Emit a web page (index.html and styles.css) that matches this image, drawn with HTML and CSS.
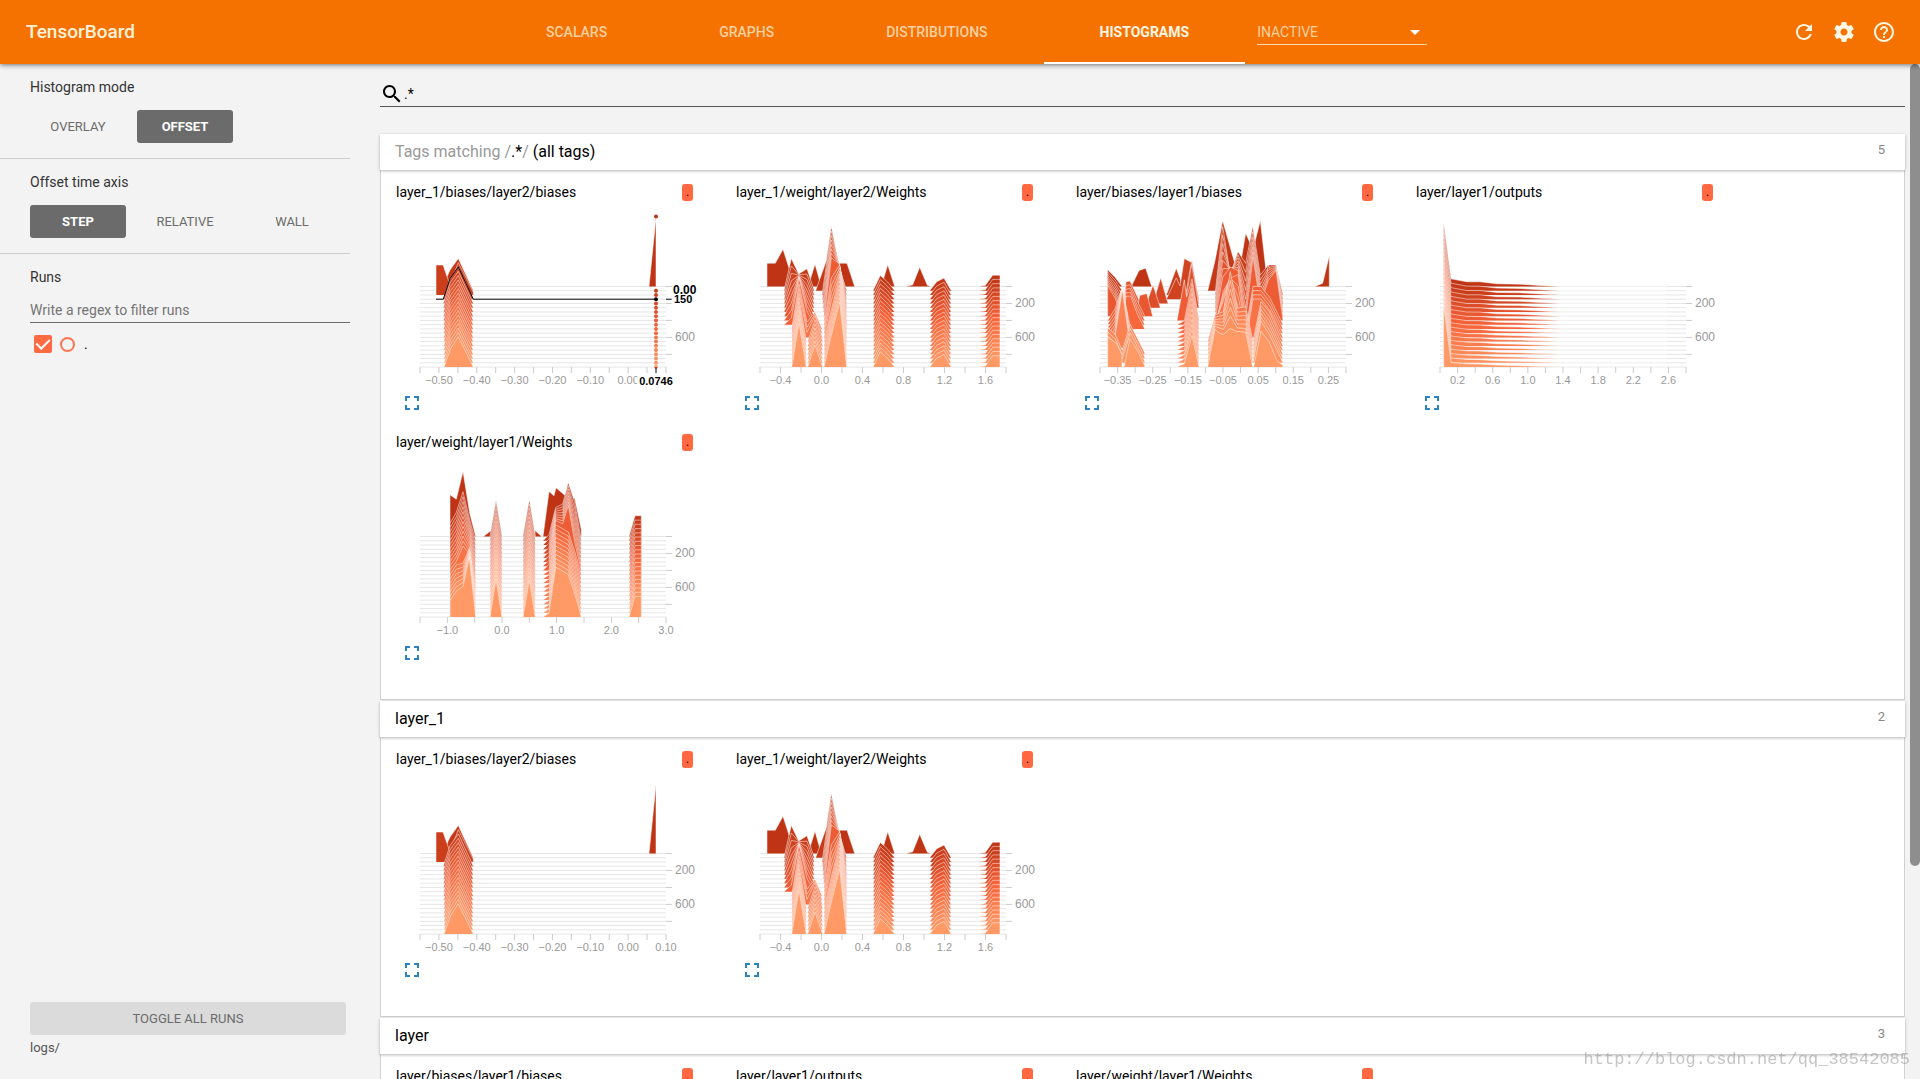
FILE: index.html
```
<!DOCTYPE html>
<html lang="en">
<head>
    <meta charset="UTF-8">
    <meta name="viewport" content="width=device-width, initial-scale=1">
    <title>TensorBoard</title>
    <link rel="stylesheet" href="styles.css">
</head>
<body>
    <header class="toolbar">
        <h1 class="brand">TensorBoard</h1>
        <nav class="tabs">
            <button class="tab">SCALARS</button>
            <button class="tab">GRAPHS</button>
            <button class="tab">DISTRIBUTIONS</button>
            <button class="tab selected">HISTOGRAMS</button>
            <div class="inactive">
                <select aria-label="Inactive dashboards">
                    <option>INACTIVE</option>
                </select>
            </div>
        </nav>
        <div class="actions">
            <button class="icon-button" aria-label="Reload">
                <svg viewBox="0 0 24 24"><path d="M17.65 6.35C16.2 4.9 14.21 4 12 4c-4.42 0-7.99 3.58-7.99 8s3.57 8 7.99 8c3.73 0 6.84-2.55 7.73-6h-2.08c-.82 2.33-3.04 4-5.65 4-3.31 0-6-2.69-6-6s2.69-6 6-6c1.66 0 3.14.69 4.22 1.78L13 11h7V4l-2.35 2.35z"/></svg>
            </button>
            <button class="icon-button" aria-label="Settings">
                <svg viewBox="0 0 24 24"><path d="M19.43 12.98c.04-.32.07-.64.07-.98s-.03-.66-.07-.98l2.11-1.65c.19-.15.24-.42.12-.64l-2-3.46c-.12-.22-.39-.3-.61-.22l-2.49 1c-.52-.4-1.08-.73-1.69-.98l-.38-2.65C14.46 2.18 14.25 2 14 2h-4c-.25 0-.46.18-.49.42l-.38 2.65c-.61.25-1.17.59-1.69.98l-2.49-1c-.23-.09-.49 0-.61.22l-2 3.46c-.13.22-.07.49.12.64l2.11 1.65c-.04.32-.07.65-.07.98s.03.66.07.98l-2.11 1.65c-.19.15-.24.42-.12.64l2 3.46c.12.22.39.3.61.22l2.49-1c.52.4 1.08.73 1.69.98l.38 2.65c.03.24.24.42.49.42h4c.25 0 .46-.18.49-.42l.38-2.65c.61-.25 1.17-.59 1.69-.98l2.49 1c.23.09.49 0 .61-.22l2-3.46c.12-.22.07-.49-.12-.64l-2.11-1.65zM12 15.5c-1.93 0-3.5-1.57-3.5-3.5s1.57-3.5 3.5-3.5 3.5 1.57 3.5 3.5-1.57 3.5-3.5 3.5z"/></svg>
            </button>
            <button class="icon-button" aria-label="Help">
                <svg viewBox="0 0 24 24"><path d="M11 18h2v-2h-2v2zm1-16C6.48 2 2 6.48 2 12s4.48 10 10 10 10-4.48 10-10S17.52 2 12 2zm0 18c-4.41 0-8-3.59-8-8s3.59-8 8-8 8 3.59 8 8-3.59 8-8 8zm0-14c-2.21 0-4 1.79-4 4h2c0-1.1.9-2 2-2s2 .9 2 2c0 2-3 1.75-3 5h2c0-2.25 3-2.5 3-5 0-2.21-1.79-4-4-4z"/></svg>
            </button>
        </div>
    </header>

    <div class="content">
        <aside class="sidebar">
            <section class="setting">
                <h2>Histogram mode</h2>
                <div class="options">
                    <button class="option">OVERLAY</button>
                    <button class="option selected">OFFSET</button>
                </div>
            </section>
            <section class="setting">
                <h2>Offset time axis</h2>
                <div class="options">
                    <button class="option selected">STEP</button>
                    <button class="option">RELATIVE</button>
                    <button class="option">WALL</button>
                </div>
            </section>
            <section class="runs">
                <h2>Runs</h2>
                <input class="regex" type="text" placeholder="Write a regex to filter runs" aria-label="Filter runs">
                <div class="run">
                    <input type="checkbox" id="run-0" checked>
                    <span class="isolate"></span>
                    <label for="run-0">.</label>
                </div>
            </section>
            <div class="sidebar-footer">
                <button class="toggle-all">TOGGLE ALL RUNS</button>
                <div class="logdir">logs/</div>
            </div>
        </aside>

        <main class="dashboard">
            <div class="search">
                <svg viewBox="0 0 24 24"><path d="M15.5 14h-.79l-.28-.27C15.41 12.59 16 11.11 16 9.5 16 5.91 13.09 3 9.5 3S3 5.91 3 9.5 5.91 16 9.5 16c1.61 0 3.09-.59 4.23-1.57l.27.28v.79l5 4.99L20.49 19l-4.99-5zm-6 0C7.01 14 5 11.99 5 9.5S7.01 5 9.5 5 14 7.01 14 9.5 11.99 14 9.5 14z"/></svg>
                <input type="text" value=".*" aria-label="Filter tags">
            </div>

            <section class="pane">
                <button class="pane-header">
                    <span><span class="muted">Tags matching /</span>.*<span class="muted">/</span> (all tags)</span>
                    <span class="count">5</span>
                </button>
                <div class="cards">
                    <div class="card" data-tag="layer_1/biases/layer2/biases" data-hover="3"></div>
                    <div class="card" data-tag="layer_1/weight/layer2/Weights"></div>
                    <div class="card" data-tag="layer/biases/layer1/biases"></div>
                    <div class="card" data-tag="layer/layer1/outputs"></div>
                    <div class="card" data-tag="layer/weight/layer1/Weights"></div>
                </div>
            </section>

            <section class="pane">
                <button class="pane-header"><span>layer_1</span><span class="count">2</span></button>
                <div class="cards">
                    <div class="card" data-tag="layer_1/biases/layer2/biases"></div>
                    <div class="card" data-tag="layer_1/weight/layer2/Weights"></div>
                </div>
            </section>

            <section class="pane">
                <button class="pane-header"><span>layer</span><span class="count">3</span></button>
                <div class="cards">
                    <div class="card" data-tag="layer/biases/layer1/biases"></div>
                    <div class="card" data-tag="layer/layer1/outputs"></div>
                    <div class="card" data-tag="layer/weight/layer1/Weights"></div>
                </div>
            </section>
        </main>
        <div class="scroll-thumb"></div>
    </div>
    <div class="watermark">http://blog.csdn.net/qq_38542085</div>
    <script src="script.js"></script>
</body>
</html>
```

FILE: styles.css
```
* {
    box-sizing: border-box;
}
body {
    margin: 0;
    height: 100vh;
    display: flex;
    flex-direction: column;
    overflow: hidden;
    background: #f3f3f3;
    font-family: Roboto, "Liberation Sans", sans-serif;
    font-size: 14px;
    color: #000;
}
button, input, select {
    font-family: inherit;
    border: none;
    background: none;
    padding: 0;
    outline: none;
}
button {
    cursor: pointer;
}
h1, h2 {
    margin: 0;
    font-weight: 400;
}

/* toolbar */
.toolbar {
    display: flex;
    flex: none;
    height: 64px;
    background: #f57200;
    color: #fff2dc;
    box-shadow: 0 1px 5px rgba(0, 0, 0, 0.55);
    z-index: 2;
}
.brand {
    width: 490px;
    padding-left: 26px;
    font-size: 19px;
    font-weight: 500;
    line-height: 64px;
}
.tabs {
    display: flex;
    flex: 1;
}
.tab {
    padding: 2px 56px 0;
    border-bottom: 2px solid transparent;
    font-size: 14px;
    font-weight: 500;
    color: #fcd0a0;
}
.tab.selected {
    border-bottom-color: #fff;
    font-weight: 700;
    color: #fff6e4;
}
.inactive {
    position: relative;
    width: 170px;
    height: 45px;
    margin-left: 12px;
    padding-top: 20px;
    border-bottom: 1px solid #fcd9a8;
}
.inactive select {
    width: 100%;
    height: 24px;
    appearance: none;
    font-size: 14px;
    color: #fcd0a0;
}
.inactive::after {
    content: "";
    position: absolute;
    right: 7px;
    top: 30px;
    border: 5px solid transparent;
    border-top-color: #fff;
    pointer-events: none;
}
.actions {
    display: flex;
    align-items: center;
    gap: 16px;
    padding-right: 24px;
}
.icon-button {
    width: 24px;
    height: 24px;
}
.icon-button svg {
    display: block;
    fill: #fff6e4;
}

/* sidebar */
.content {
    position: relative;
    display: flex;
    flex: 1;
    min-height: 0;
}
.sidebar {
    display: flex;
    flex-direction: column;
    flex: none;
    width: 350px;
}
.sidebar h2 {
    font-size: 14px;
    line-height: 20px;
    color: #333;
}
.setting {
    height: 95px;
    padding: 13px 0 0 30px;
    border-bottom: 1px solid #cfcfcf;
}
.options {
    display: flex;
    gap: 11px;
    margin-top: 13px;
}
.option {
    width: 96px;
    height: 33px;
    border-radius: 3px;
    font-size: 13px;
    color: #6b6b6b;
}
.option.selected {
    background: #6b6b6b;
    color: #fff;
    font-weight: 700;
}
.runs {
    flex: 1;
    padding: 13px 0 0 30px;
}
.regex {
    display: block;
    width: 100%;
    height: 27px;
    margin-top: 9px;
    padding-top: 2px;
    border-bottom: 1px solid #6b6b6b;
    font-size: 14px;
}
.regex::placeholder {
    color: #757575;
}
.run {
    display: flex;
    align-items: center;
    padding: 12px 4px;
}
.run input {
    appearance: none;
    width: 18px;
    height: 18px;
    margin: 0 8px 0 0;
    border-radius: 2px;
    background: #ff6a42;
    display: grid;
    place-items: center;
}
.run input::before {
    content: "";
    width: 6px;
    height: 11px;
    margin-top: -3px;
    border: solid #fff;
    border-width: 0 2px 2px 0;
    transform: rotate(45deg);
}
.isolate {
    width: 15px;
    height: 15px;
    margin-right: 9px;
    border: 2px solid #ff7350;
    border-radius: 50%;
}
.sidebar-footer {
    padding: 0 4px 22px 30px;
}
.toggle-all {
    width: 100%;
    height: 33px;
    border-radius: 3px;
    background: #dbdbdb;
    font-size: 13px;
    color: #6b6b6b;
}
.logdir {
    padding-top: 4px;
    font-size: 13px;
    line-height: 18px;
    color: #555;
}

/* dashboard */
.dashboard {
    flex: 1;
    min-width: 0;
    padding: 18px 15px 0 30px;
    overflow: hidden;
}
.search {
    display: flex;
    align-items: center;
    height: 25px;
    border-bottom: 1px solid #555;
    margin-bottom: 27px;
}
.search svg {
    width: 24px;
    height: 24px;
}
.search input {
    flex: 1;
    height: 22px;
    font-size: 14px;
}
.pane {
    margin-bottom: 1px;
}
.pane-header {
    position: relative;
    display: flex;
    justify-content: space-between;
    width: 100%;
    height: 36px;
    padding: 0 20px 0 15px;
    background: #fff;
    box-shadow: 0 1px 3px rgba(0, 0, 0, 0.3);
    font-size: 16px;
    line-height: 36px;
    color: #000;
}
.muted {
    color: #999;
}
.count {
    font-size: 13px;
    line-height: 31px;
    color: #888;
}
.cards {
    display: flex;
    flex-wrap: wrap;
    padding-bottom: 29px;
    border: 1px solid #d0d0d0;
    border-top: none;
    background: #fff;
}
.card {
    width: 340px;
    height: 250px;
    padding: 14px 15px 0;
}
.card-title {
    display: flex;
    justify-content: space-between;
    width: 297px;
    line-height: 17px;
}
.badge {
    width: 11px;
    height: 17px;
    border-radius: 3px;
    background: #ff6840;
    font-size: 12px;
    text-align: center;
}
.chart {
    display: block;
    width: 310px;
    height: 190px;
    font-family: "Liberation Sans", sans-serif;
    font-size: 11px;
    fill: #999;
}
.chart .grid {
    stroke: #e6e6e6;
}
.chart .tick {
    stroke: #ccc;
}
.chart .step {
    font-size: 12px;
}
.chart .outline {
    fill: none;
    stroke: #fff;
    stroke-opacity: 0.5;
}
.chart .hover-line {
    fill: none;
    stroke: #000;
}
.chart .hover-label {
    fill: #000;
    font-weight: bold;
    stroke: #fff;
    stroke-width: 6px;
    paint-order: stroke;
}
.chart .time {
    font-size: 12px;
    stroke: none;
}
.expand {
    display: block;
    width: 24px;
    height: 24px;
    margin-left: 4px;
}
.expand svg {
    display: block;
    fill: #2b84c2;
}

.scroll-thumb {
    position: absolute;
    top: 0;
    right: 0;
    width: 10px;
    height: 79%;
    border-radius: 5px;
    background: #8e8e8e;
}
.watermark {
    position: fixed;
    right: 10px;
    bottom: 9px;
    z-index: 3;
    font-family: "Liberation Mono", monospace;
    font-size: 17px;
    line-height: 20px;
    color: rgba(140, 140, 140, 0.5);
}
```

FILE: script.js
```
// Each histogram has 20 steps (0, 50 ... 950), drawn back to front.
// bands: [first step, last step, points at first, points at last]
// points are [x, height] on a 738 unit wide plot.
const STEPS = 20;
const PLOT_W = 246;
const UNITS = 738;
const LEFT = 24;
const TOP = 85.5;
const ROW = 4.24;

const histograms = {
    "layer_1/biases/layer2/biases": {
        intervals: 13,
        labels: ["−0.50", "−0.40", "−0.30", "−0.20", "−0.10", "0.00", "0.10"],
        bands: [
            [0, 0, [[687, 0], [708, 206], [708, 0]]],
            [1, 1, [[62, 0], [90, 62], [115, 97], [160, 0]]],
            [2, 2, [[48, 0], [48, 90], [69, 90], [90, 30], [115, 97], [160, 8], [160, 0]]],
            [3, 19, [[70, 0], [90, 62], [115, 97], [160, 0]], [[72, 0], [92, 56], [115, 91], [160, 0]]]
        ]
    },
    "layer_1/weight/layer2/Weights": {
        intervals: 12,
        labels: ["−0.4", "0.0", "0.4", "0.8", "1.2", "1.6"],
        bands: [
            [0, 0, [[21, 0], [21, 70], [46, 70], [69, 112], [92, 40], [144, 0], [165, 67], [184, 0]]],
            [0, 0, [[215, 0], [238, 70], [261, 70], [284, 0]]],
            [0, 0, [[364, 0], [383, 65], [404, 0]]],
            [0, 0, [[438, 0], [458, 5], [479, 58], [502, 4], [512, 0]]],
            [1, 1, [[167, 0], [199, 90], [214, 192], [238, 70], [260, 0]]],
            [1, 9, [[72, 0], [94, 97], [116, 50], [141, 66], [163, 0]], [[72, 0], [94, 20], [117, 140], [141, 40], [163, 0]]],
            [2, 8, [[186, 0], [214, 192], [238, 90], [260, 0]], [[192, 0], [214, 188], [238, 170], [260, 0]]],
            [9, 12, [[192, 0], [214, 140], [239, 180], [260, 0]], [[192, 0], [214, 110], [239, 190], [260, 0]]],
            [10, 12, [[95, 0], [117, 135], [141, 20], [165, 50], [186, 0]], [[95, 0], [117, 132], [141, 15], [165, 65], [187, 0]]],
            [13, 19, [[95, 0], [117, 132], [139, 0]]],
            [13, 19, [[143, 0], [165, 66], [188, 0]]],
            [13, 19, [[192, 0], [214, 95], [239, 195], [260, 0]]],
            [1, 19, [[339, 0], [361, 46], [383, 26], [404, 0]]],
            [1, 19, [[509, 0], [530, 27], [552, 38], [574, 0]]],
            [0, 19, [[654, 0], [676, 3], [698, 34], [720, 34], [720, 0]]]
        ]
    },
    "layer/biases/layer1/biases": {
        intervals: 14,
        labels: ["−0.35", "−0.25", "−0.15", "−0.05", "0.05", "0.15", "0.25"],
        bands: [
            [0, 0, [[94, 0], [117, 48], [137, 55], [155, 0]]],
            [0, 0, [[645, 0], [668, 10], [688, 92], [688, 0]]],
            [0, 0, [[410, 0], [437, 160], [459, 110], [481, 198], [499, 40], [520, 0]]],
            [0, 7, [[23, 0], [23, 50], [45, 28], [67, 0]], [[23, 0], [23, 92], [45, 55], [67, 0]]],
            [1, 1, [[323, 0], [345, 90], [368, 210], [405, 80], [420, 0]]],
            [2, 2, [[199, 0], [229, 80], [240, 50], [252, 0]]],
            [3, 3, [[199, 0], [229, 64], [240, 40], [253, 122], [275, 110], [297, 0]]],
            [4, 4, [[159, 0], [182, 77], [204, 0]]],
            [4, 4, [[485, 0], [505, 115], [530, 60], [549, 0]]],
            [5, 5, [[135, 0], [159, 68], [181, 0]]],
            [4, 5, [[253, 0], [275, 130], [297, 0]]],
            [7, 7, [[108, 0], [119, 62], [140, 68], [158, 0]]],
            [2, 8, [[345, 0], [368, 205], [391, 60], [414, 130], [437, 95], [458, 205], [481, 60], [505, 90], [528, 90], [549, 0]], [[345, 0], [368, 130], [391, 160], [414, 150], [437, 10], [459, 190], [481, 50], [505, 120], [528, 150], [549, 0]]],
            [8, 8, [[231, 0], [253, 122], [260, 70], [276, 125], [297, 0]]],
            [6, 10, [[67, 0], [78, 90], [90, 93], [110, 50], [134, 0]], [[67, 0], [78, 98], [92, 98], [112, 45], [134, 0]]],
            [9, 12, [[347, 0], [370, 100], [391, 140], [414, 150], [437, 0]], [[330, 0], [370, 110], [391, 175], [414, 90], [440, 0]]],
            [9, 12, [[440, 0], [459, 115], [483, 115], [510, 80], [549, 0]]],
            [13, 18, [[323, 0], [345, 80], [370, 90], [391, 210], [412, 100], [437, 105], [459, 0]], [[323, 0], [345, 110], [370, 100], [391, 140], [412, 105], [437, 103], [459, 0]]],
            [13, 18, [[459, 0], [483, 120], [508, 90], [530, 40], [549, 0]], [[459, 0], [483, 125], [508, 85], [530, 40], [549, 0]]],
            [8, 15, [[23, 0], [45, 35], [67, 100], [92, 0]], [[23, 15], [45, 40], [67, 180], [92, 0]]],
            [9, 18, [[231, 0], [253, 12], [276, 125], [297, 0]], [[231, 0], [253, 12], [276, 100], [297, 0]]],
            [16, 18, [[23, 0], [23, 80], [45, 60], [67, 12], [91, 90], [134, 5], [134, 0]]],
            [19, 19, [[23, 0], [23, 90], [50, 70], [66, 38], [66, 0]]],
            [19, 19, [[72, 0], [90, 85], [112, 50], [134, 5], [134, 0]]],
            [19, 19, [[231, 0], [253, 10], [276, 95], [297, 0]]],
            [19, 19, [[323, 0], [345, 113], [357, 102], [370, 98], [390, 115], [412, 107], [437, 105], [458, 0]]],
            [19, 19, [[461, 0], [483, 108], [508, 75], [530, 20], [549, 5], [549, 0]]]
        ]
    },
    "layer/layer1/outputs": {
        intervals: 14,
        labels: ["0.2", "0.6", "1.0", "1.4", "1.8", "2.2", "2.6"],
        bands: [
            [0, 19, [[11, 0], [11, 188], [33, 23], [80, 14], [120, 14], [170, 8], [240, 7], [300, 3], [360, 0], [680, 0]], [[11, 0], [11, 186], [33, 14], [80, 10], [120, 9], [170, 6], [240, 4], [300, 2], [360, 0], [680, 0]]]
        ]
    },
    "layer/weight/layer1/Weights": {
        intervals: 9,
        labels: ["−1.0", "0.0", "1.0", "2.0", "3.0"],
        bands: [
            [0, 0, [[90, 0], [90, 125], [109, 112], [129, 195], [149, 70], [167, 0]]],
            [0, 0, [[190, 0], [211, 16], [228, 16], [228, 0]]],
            [0, 0, [[345, 0], [345, 18], [365, 0]]],
            [0, 0, [[369, 0], [387, 135], [402, 122], [408, 146], [445, 115], [464, 115], [484, 20], [484, 0]]],
            [1, 12, [[90, 0], [90, 52], [109, 85], [129, 147], [149, 62], [167, 0]], [[90, 0], [90, 52], [109, 78], [129, 124], [149, 100], [167, 0]]],
            [13, 19, [[90, 0], [90, 50], [109, 80], [129, 85], [148, 130], [167, 0]], [[90, 0], [90, 50], [109, 78], [129, 92], [148, 178], [167, 0]]],
            [0, 19, [[210, 0], [228, 108], [246, 0]], [[210, 0], [228, 114], [246, 0]]],
            [0, 19, [[309, 0], [328, 110], [346, 0]]],
            [1, 8, [[369, 0], [387, 18], [407, 100], [428, 110], [445, 175], [464, 115], [484, 0]], [[369, 0], [387, 18], [407, 150], [428, 140], [445, 195], [464, 85], [484, 0]]],
            [9, 19, [[369, 0], [387, 12], [407, 150], [445, 128], [464, 70], [484, 0]]],
            [0, 19, [[627, 0], [645, 62], [664, 62], [664, 0]]]
        ]
    }
};

function color(step) {
    const stops = [[191, 52, 20], [246, 100, 58], [255, 153, 102]];
    const t = step / (STEPS - 1) * 2;
    const i = t < 1 ? 0 : 1;
    const c = stops[i].map((v, n) => Math.round(v + (stops[i + 1][n] - v) * (t - i)));
    return `rgb(${c.join(",")})`;
}

function px(units) {
    return LEFT + units * PLOT_W / UNITS;
}

function base(step) {
    return TOP + step * ROW;
}

function pointsAt(band, step) {
    const [from, to, a, b] = band;
    if (!b) return a;
    const t = (step - from) / (to - from || 1);
    return a.map((p, i) => [p[0] + (b[i][0] - p[0]) * t, p[1] + (b[i][1] - p[1]) * t]);
}

function path(points, step) {
    return points.map((p, i) => (i ? "L" : "M") + px(p[0]).toFixed(1) + " " + (base(step) - p[1] / 3).toFixed(1)).join("");
}

function drawChart(data, hover) {
    let out = "";
    const right = LEFT + PLOT_W;
    const bottom = base(STEPS - 1);

    for (let s = 0; s < STEPS; s++) {
        out += `<line class="grid" x1="${LEFT}" x2="${right}" y1="${base(s)}" y2="${base(s)}"/>`;
    }
    for (let s = 0; s < STEPS; s++) {
        data.bands.filter(b => s >= b[0] && s <= b[1]).forEach(b => {
            const d = path(pointsAt(b, s), s);
            out += `<path d="${d}Z" fill="${color(s)}"/><path class="outline" d="${d}"/>`;
        });
    }

    for (let s = 0; s < STEPS; s += 4) {
        out += `<line class="tick" x1="${right}" x2="${right + 6}" y1="${base(s)}" y2="${base(s)}"/>`;
    }
    if (hover === null) out += `<text class="step" x="${right + 9}" y="${base(4) + 4}">200</text>`;
    out += `<text class="step" x="${right + 9}" y="${base(12) + 4}">600</text>`;

    for (let i = 0; i <= data.intervals; i++) {
        const x = LEFT + i * PLOT_W / data.intervals;
        out += `<line class="tick" x1="${x}" x2="${x}" y1="${bottom}" y2="${bottom + 6}"/>`;
        if (i % 2 && data.labels[(i - 1) / 2] && !(hover !== null && i === data.intervals)) {
            out += `<text x="${x}" y="183" text-anchor="middle">${data.labels[(i - 1) / 2]}</text>`;
        }
    }

    if (hover !== null) {
        const x = px(708);
        const y = base(hover);
        out += `<path class="hover-line" d="${path([[48, 0], [70, 0], [90, 62], [115, 97], [160, 0], [708, 0]], hover)}"/>`;
        for (let s = 0; s < STEPS; s++) {
            const cy = s ? base(s) : base(0) - 70;
            out += `<circle cx="${x}" cy="${cy}" r="2" fill="${s === hover ? "#000" : color(s)}"/>`;
        }
        out += `<line class="hover-line" x1="${x}" x2="${x}" y1="${bottom}" y2="${bottom + 6}"/>`;
        out += `<line class="hover-line" x1="${right}" x2="${right + 6}" y1="${y}" y2="${y}"/>`;
        out += `<text class="hover-label" x="${x}" y="184" text-anchor="middle">0.0746</text>`;
        out += `<text class="hover-label" x="${right + 8}" y="${y + 4}">150</text>`;
        out += `<text class="hover-label time" x="${right + 7}" y="${base(1) + 3}">0.00</text>`;
    }
    return `<svg class="chart" viewBox="0 0 310 190">${out}</svg>`;
}

document.querySelectorAll(".card").forEach(card => {
    const tag = card.dataset.tag;
    const hover = card.dataset.hover ? Number(card.dataset.hover) : null;
    card.innerHTML = `
        <div class="card-title"><span>${tag}</span><span class="badge">.</span></div>
        ${drawChart(histograms[tag], hover)}
        <button class="expand" aria-label="Expand chart">
            <svg viewBox="0 0 24 24"><path d="M7 14H5v5h5v-2H7v-3zm-2-4h2V7h3V5H5v5zm12 7h-3v2h5v-5h-2v3zM14 5v2h3v3h2V5h-5z"/></svg>
        </button>`;
});
```
